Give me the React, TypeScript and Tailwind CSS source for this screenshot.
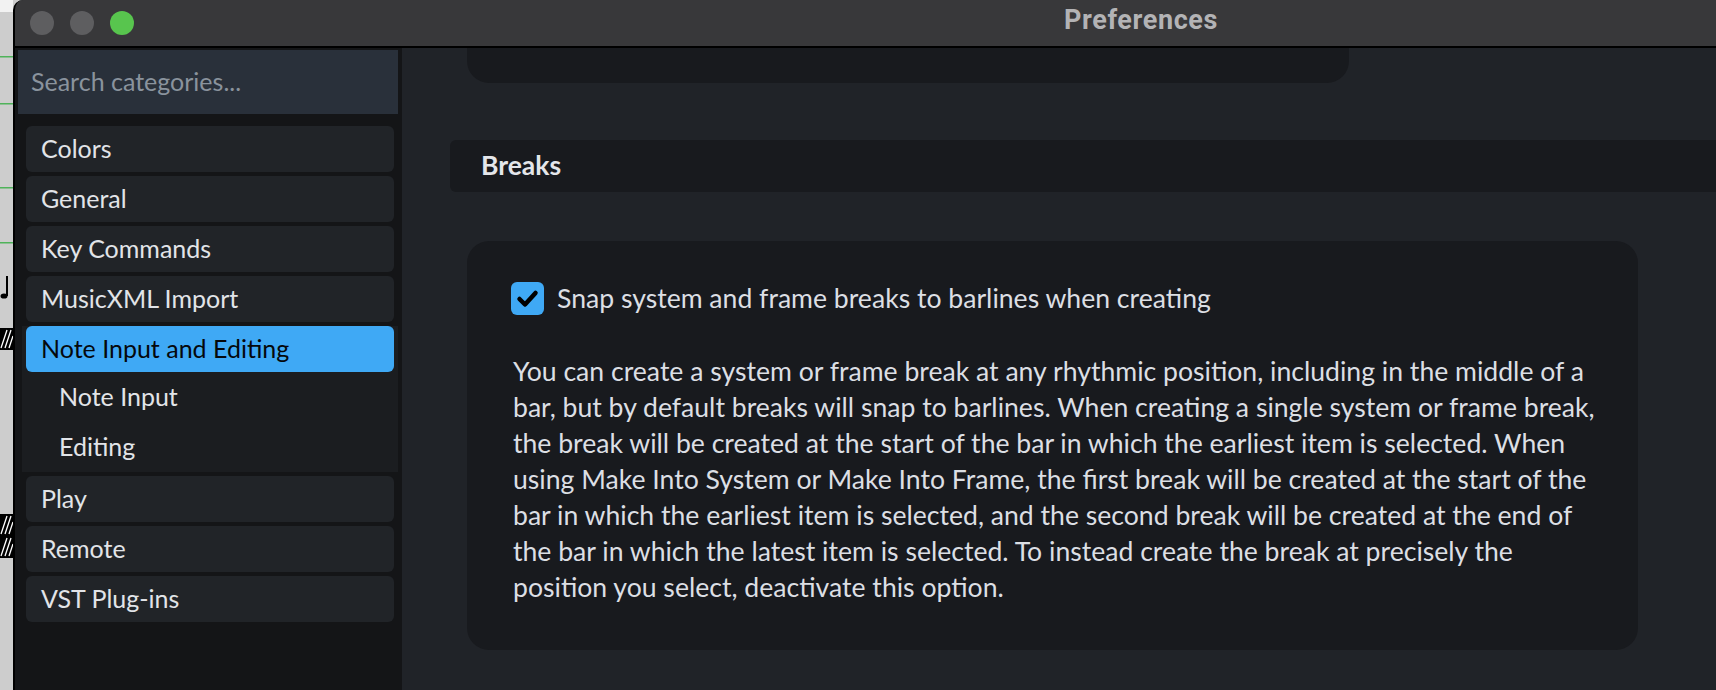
import React from 'react';

const categories = ['Colors', 'General', 'Key Commands', 'MusicXML Import'];
const afterCategories = ['Play', 'Remote', 'VST Plug-ins'];
const subItems = ['Note Input', 'Editing'];

const paragraph = [
  'You can create a system or frame break at any rhythmic position, including in the middle of a',
  'bar, but by default breaks will snap to barlines. When creating a single system or frame break,',
  'the break will be created at the start of the bar in which the earliest item is selected. When',
  'using Make Into System or Make Into Frame, the first break will be created at the start of the',
  'bar in which the earliest item is selected, and the second break will be created at the end of',
  'the bar in which the latest item is selected. To instead create the break at precisely the',
  'position you select, deactivate this option.',
];

// sliver of the score window peeking out behind the dialog
const ScoreSliver: React.FC = () => (
  <svg width="13" height="690" viewBox="0 0 13 690" className="shrink-0 block">
    <rect width="13" height="690" fill="#cdcdcd" />
    <rect width="13" height="12" fill="#f2f2f2" />
    {[56, 103, 187, 242].map((y) => (
      <rect key={y} x="0" y={y} width="13" height="1.5" fill="#4fb35a" />
    ))}
    <rect x="6" y="276" width="2" height="20" fill="#000" />
    <ellipse cx="4" cy="296" rx="3.5" ry="2.6" fill="#000" />
    {[328, 514, 536].map((y) => (
      <g key={y}>
        <rect x="0" y={y} width="13" height="22" fill="#000" />
        <path d={`M1 ${y + 20} L7 ${y + 2} M5 ${y + 20} L11 ${y + 2} M9 ${y + 20} L13 ${y + 8}`} stroke="#fff" strokeWidth="1.3" />
      </g>
    ))}
  </svg>
);

const SidebarItem: React.FC<{ label: string; selected?: boolean }> = ({ label, selected }) => (
  <div
    className={
      selected
        ? 'h-[46px] rounded-[6px] bg-[#3fa9f5] pl-[15px] flex items-center text-[25px] text-[#05080c]'
        : 'h-[46px] rounded-[6px] bg-[#212428] pl-[15px] flex items-center text-[25px] text-[#e2e4e8]'
    }
  >
    {label}
  </div>
);

export default function App() {
  return (
    <div
      className="w-[1716px] h-[690px] flex overflow-hidden bg-[#cdcdcd]"
      style={{ fontFamily: 'Lato, "Noto Sans", sans-serif' }}
    >
      <ScoreSliver />

      <div className="flex-1 flex flex-col border-l-2 border-black rounded-tl-[10px] overflow-hidden bg-[#202328]">
        {/* Title bar */}
        <div className="h-[48px] shrink-0 bg-[#38383a] border-b-2 border-black flex items-center pl-[15px]">
          <div className="flex gap-[16px]">
            <span className="size-[24px] rounded-full bg-[#5e5e60]" />
            <span className="size-[24px] rounded-full bg-[#5e5e60]" />
            <span className="size-[24px] rounded-full bg-[#58c54e]" />
          </div>
          <span
            className="ml-[930px] text-[27px] font-bold tracking-[0.6px] text-[#b3b3b5] leading-none -mt-[6px]"
            style={{ fontFamily: 'Roboto, "Liberation Sans", sans-serif' }}
          >
            Preferences
          </span>
        </div>

        <div className="flex-1 flex min-h-0">
          {/* Sidebar */}
          <div className="w-[387px] shrink-0 bg-[#141517] flex flex-col">
            <div className="h-[64px] mt-[2px] ml-[3px] mr-[4px] bg-[#29303a] flex items-center pl-[13px] text-[25px] text-[#8a939d]">
              Search categories...
            </div>
            <div className="mt-[12px] ml-[11px] mr-[8px] flex flex-col gap-[4px]">
              {categories.map((c) => (
                <SidebarItem key={c} label={c} />
              ))}
              <div className="-mx-[4px] px-[4px] bg-[#1b1d20]">
                <SidebarItem label="Note Input and Editing" selected />
                {subItems.map((s) => (
                  <div key={s} className="h-[50px] pl-[33px] flex items-center text-[25px] text-[#e2e4e8]">
                    {s}
                  </div>
                ))}
              </div>
              {afterCategories.map((c) => (
                <SidebarItem key={c} label={c} />
              ))}
            </div>
          </div>

          {/* Content */}
          <div className="flex-1 flex flex-col bg-[#202328]">
            <div className="ml-[65px] w-[882px] h-[35px] rounded-b-[22px] bg-[#181a1e]" />

            <div className="mt-[57px] ml-[48px] h-[52px] rounded-l-[6px] bg-[#181a1e] flex items-center pl-[31px]">
              <span className="text-[26.5px] font-bold text-[#e4e6ea]">Breaks</span>
            </div>

            <div className="mt-[49px] ml-[65px] w-[1171px] rounded-[22px] bg-[#181a1e] pt-[38px] pl-[44px] pb-[45px]">
              <div className="flex items-center gap-[13px]">
                <span className="size-[33px] rounded-[6px] bg-[#3fa9f5] flex items-center justify-center shrink-0">
                  <svg width="33" height="33" viewBox="0 0 33 33">
                    <path d="M8.5 17 L14 22.5 L24.5 11" fill="none" stroke="#000" strokeWidth="4.5" strokeLinecap="round" strokeLinejoin="round" />
                  </svg>
                </span>
                <span className="text-[26.6px] text-[#dcdfe4] whitespace-nowrap">
                  Snap system and frame breaks to barlines when creating
                </span>
              </div>

              <div className="mt-[34px] pl-[2px] text-[26.6px] leading-[36px] text-[#dcdfe4]">
                {paragraph.map((line) => (
                  <div key={line} className="whitespace-nowrap">
                    {line}
                  </div>
                ))}
              </div>
            </div>
          </div>
        </div>
      </div>
    </div>
  );
}
